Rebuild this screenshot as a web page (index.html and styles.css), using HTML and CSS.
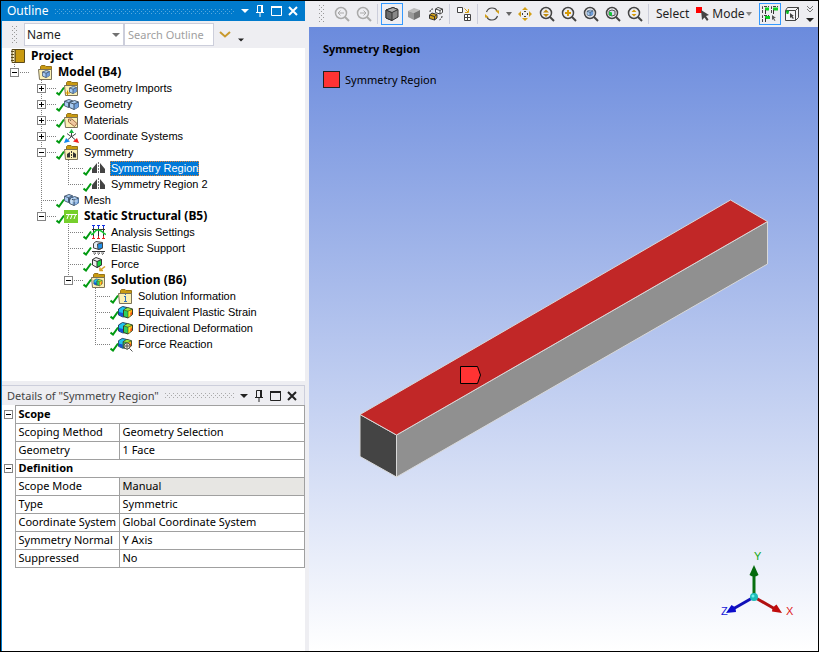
FILE: index.html
```html
<!DOCTYPE html>
<html lang="en">
<head>
<meta charset="utf-8">
<title>Mechanical</title>
<link rel="stylesheet" href="styles.css">
</head>
<body>
<svg class="sprite" aria-hidden="true">
  <symbol id="check" viewBox="0 0 9 10"><path d="M.5 6.500 3 8.500 8 1.500" fill="none" stroke="#009a10" stroke-width="2"/></symbol>
  <symbol id="folder" viewBox="0 0 15 15"><path d="M2.500 5V1.500L3.500 .5H7L8 1.500H13.500V5Z" fill="#c99a10" stroke="#94731c"/><path d="M.5 4.500H13.500V14.500H1.500Z" fill="#fbf0b4" stroke="#7b7258"/></symbol>
  <symbol id="cube" viewBox="0 0 10 10"><path d="M.5 2.500 5.500.5 9.500 2 9.500 7 5 9.500.5 7.500Z" fill="#a9ccf2" stroke="#41546b"/><path d="M5 4 9.500 2V7L5 9.500Z" fill="#6f9fdc"/><path d="M.5 2.500 5 4 9.500 2M5 4V9.500" fill="none" stroke="#41546b"/></symbol>
  <symbol id="rainbow" viewBox="0 0 15 15"><path d="M.5 4 4.500 1.500 9 2.500V11L5 12 .5 10Z" fill="#1fc4ee" stroke="#244564"/><path d="M1 7 5 8V12L1 10Z" fill="#1453d8"/><path d="M5.500 5 9.500 2.500 14.500 4V9.500L10 13 5.500 11.500Z" fill="#2ed05c" stroke="#3b4024"/><path d="M6 5 9.500 3 14 4.200 10 6Z" fill="#9fe63a"/><path d="M10 6.200 14 4.500V9.500L10 12.500Z" fill="#ffb016"/><path d="M10 6.200 12 5.300V11L10 12.500Z" fill="#f6e822"/><path d="M12.500 8 14 7V9.500L12.500 10.700Z" fill="#f04a1c"/><path d="M5.500 5 10 6.200 14.500 4M10 6.200V13" fill="none" stroke="#3b4024" stroke-width=".6"/></symbol>
  <symbol id="sym" viewBox="0 0 15 15"><path d="M6 2V12H1V8ZM9 2V12H14V8Z" fill="#444"/><path d="M7.500 1V13" stroke="#777" stroke-dasharray="2 1"/></symbol>
  <symbol id="mag" viewBox="0 0 16 16"><circle cx="7" cy="7" r="5.500" fill="none" stroke="currentColor" stroke-width="1.500"/><path d="M11 11 15 15" stroke="currentColor" stroke-width="2"/></symbol>
  <symbol id="down" viewBox="0 0 8 4"><path d="M0 0H8L4 4Z" fill="currentColor"/></symbol>
  <symbol id="pin" viewBox="0 0 10 12"><path d="M2.500 7V.5H6M1 7.500H9M5 8V12" fill="none" stroke="currentColor"/><path d="M6 0H8V7H6Z" fill="currentColor"/></symbol>
  <symbol id="max" viewBox="0 0 11 10"><path d="M.5 1V9.500H10.500V1M0 1H11" fill="none" stroke="currentColor"/><path d="M0 0H11V2H0Z" fill="currentColor"/></symbol>
  <symbol id="close" viewBox="0 0 10 10"><path d="M1 1 9 9M9 1 1 9" stroke="currentColor" stroke-width="2"/></symbol>
</svg>
<div class="app">
  <aside class="side">
    <section class="outline">
      <header class="bar bar-active">
        <h2>Outline</h2><span class="dots"></span>
        <button aria-label="Window menu"><svg class="w8"><use href="#down"/></svg></button>
        <button aria-label="Pin"><svg class="w10"><use href="#pin"/></svg></button>
        <button aria-label="Maximize"><svg class="w11"><use href="#max"/></svg></button>
        <button aria-label="Close"><svg class="w10"><use href="#close"/></svg></button>
      </header>
      <div class="filter">
        <span class="grip"></span>
        <div class="combo"><select aria-label="Filter by"><option>Name</option></select><svg class="w8"><use href="#down"/></svg></div>
        <input type="text" aria-label="Search Outline" placeholder="Search Outline">
        <button aria-label="Expand filter"><svg class="chev" viewBox="0 0 12 7"><path d="M1 1 6 5.500 11 1" fill="none" stroke="#c99a2e" stroke-width="2"/></svg></button>
        <button class="low" aria-label="More"><svg class="w6" viewBox="0 0 6 3"><path d="M0 0H6L3 3Z" fill="#222"/></svg></button>
      </div>
      <ul class="tree">
        <li class="root">
          <div class="row project"><svg class="ico" viewBox="0 0 15 15"><path d="M4 .5H13.500V13.500H4Z" fill="#c99a10" stroke="#5b4a1a"/><path d="M1 .5H4V13.500H1Z" fill="#fff3c4" stroke="#5b4a1a"/><path d="M0 2.500H3M0 5.500H3M0 8.500H3M0 11.500H3" stroke="#5b4a1a"/></svg><b>Project</b></div>
          <ul>
            <li>
              <div class="row nocheck"><button class="exp" aria-label="Collapse"></button><i></i><svg class="ico"><use href="#folder"/><use href="#cube" x="4" y="5" width="8" height="8"/></svg><b>Model (B4)</b></div>
              <ul>
                <li><div class="row"><button class="exp plus" aria-label="Expand"></button><i></i><svg class="chk"><use href="#check"/></svg><svg class="ico"><use href="#folder"/><use href="#cube" x="5" y="5" width="8" height="8"/><path d="M1 12H6M3.500 9.500V14.500" stroke="#d09000"/></svg><span>Geometry Imports</span></div></li>
                <li><div class="row"><button class="exp plus" aria-label="Expand"></button><i></i><svg class="chk"><use href="#check"/></svg><svg class="ico"><use href="#cube" x="0" y="2" width="9" height="9"/><use href="#cube" x="5" y="3" width="10" height="10"/></svg><span>Geometry</span></div></li>
                <li><div class="row"><button class="exp plus" aria-label="Expand"></button><i></i><svg class="chk"><use href="#check"/></svg><svg class="ico"><use href="#folder"/><path d="M4.500 6H8L13 10.500 10.500 13.500 4.500 9Z" fill="#efc9a0" stroke="#a66f48"/><path d="M6 7.500H7" stroke="#775"/></svg><span>Materials</span></div></li>
                <li><div class="row"><button class="exp plus" aria-label="Expand"></button><i></i><svg class="chk"><use href="#check"/></svg><svg class="ico" viewBox="0 0 15 15"><path d="M7.500 8V4M7 8 4 10.500M8 8 11 10.500M7 7.500 3 4.500M8 7.500 12 4.500" stroke="#444"/><path d="M5 4 7.500 0 10 4Z" fill="#12b43c"/><path d="M0 14 2 9 6 12.500Z" fill="#1188f0"/><path d="M15 14 13 9 9 12.500Z" fill="#f22020"/></svg><span>Coordinate Systems</span></div></li>
                <li><div class="row"><button class="exp" aria-label="Collapse"></button><i></i><svg class="chk"><use href="#check"/></svg><svg class="ico"><use href="#folder"/><path d="M3 12.500V9L6 7V12.500ZM9 12.500V7L12 9V12.500Z" fill="#333"/><path d="M7.500 6V13" stroke="#333" stroke-dasharray="2 1"/></svg><span>Symmetry</span></div>
                  <ul>
                    <li><div class="row"><i></i><svg class="chk"><use href="#check"/></svg><svg class="ico"><use href="#sym"/></svg><span class="sel">Symmetry Region</span></div></li>
                    <li><div class="row"><i></i><svg class="chk"><use href="#check"/></svg><svg class="ico"><use href="#sym"/></svg><span>Symmetry Region 2</span></div></li>
                  </ul>
                </li>
                <li><div class="row"><i></i><svg class="chk"><use href="#check"/></svg><svg class="ico mesh"><use href="#cube" x="0" y="1" width="9" height="9"/><use href="#cube" x="5" y="3" width="10" height="10"/><path d="M7.500 5V11M12 5V11M6 8H14" stroke="#dbe8f5" stroke-width=".7"/></svg><span>Mesh</span></div></li>
                <li><div class="row"><button class="exp" aria-label="Collapse"></button><i></i><svg class="chk"><use href="#check"/></svg><svg class="ico" viewBox="0 0 15 15"><path d="M0 1H14V14H0Z" fill="#76cf2c"/><path d="M2 5.500H13M4.500 6 3 10M8 6 6.500 10M11.500 6 10 10" fill="none" stroke="#fff"/></svg><b>Static Structural (B5)</b></div>
                  <ul>
                    <li><div class="row"><i></i><svg class="chk"><use href="#check"/></svg><svg class="ico" viewBox="0 0 15 15"><path d="M2.500 2V12M7.500 2V12M12.500 2V12M1 4.500H14" stroke="#333"/><path d="M0 9.500Q2 9.500 3.500 7T7.500 5 11.500 7 15 9.500" fill="none" stroke="#12c832" stroke-width="1.500"/><path d="M1 .5H4M6 .5H9M11 .5H14M2.500 1V3M7.500 1V3M12.500 1V3" stroke="#1434e0"/><path d="M1 13.500H4M6 13.500H9M11 13.500H14M2.500 11V14M7.500 11V14M12.500 11V14" stroke="#e42020"/></svg><span>Analysis Settings</span></div></li>
                    <li><div class="row"><i></i><svg class="chk"><use href="#check"/></svg><svg class="ico" viewBox="0 0 15 15"><path d="M2.500 2.500 5 .5 11.500 1.500V7L8.500 8.500 2.500 7Z" fill="#e8eef4" stroke="#444"/><path d="M6.500 3 11.500 2V7L7 8.500Z" fill="#1f92ee" stroke="#444"/><path d="M1 10.500H14" stroke="#333"/><path d="M2 12H5L3 14M6 12H9L7 14M10 12H13L11 14" fill="none" stroke="#777"/></svg><span>Elastic Support</span></div></li>
                    <li><div class="row"><i></i><svg class="chk"><use href="#check"/></svg><svg class="ico" viewBox="0 0 15 15"><path d="M1.500 2.500 5 .5 10.500 2.500V8L6 10.500 1.500 8Z" fill="#eee" stroke="#333"/><path d="M6 4.500 10.500 2.500V8L6 10.500Z" fill="#14d83e" stroke="#333"/><path d="M1.500 2.500 6 4.500" stroke="#333"/><path d="M14 9.500 10 12.500M9 10.500V13.500H12" fill="none" stroke="#d6a12a" stroke-width="1.500"/></svg><span>Force</span></div></li>
                    <li><div class="row"><button class="exp" aria-label="Collapse"></button><i></i><svg class="chk"><use href="#check"/></svg><svg class="ico"><use href="#folder"/><use href="#rainbow" x="2" y="5" width="10" height="9"/></svg><b>Solution (B6)</b></div>
                      <ul>
                        <li><div class="row"><i></i><svg class="chk"><use href="#check"/></svg><svg class="ico"><use href="#folder"/><path d="M6 7.500H8M7.500 7V12M6 12.500H9M7 5.500H8" stroke="#2f6fbd"/></svg><span>Solution Information</span></div></li>
                        <li><div class="row"><i></i><svg class="chk"><use href="#check"/></svg><svg class="ico"><use href="#rainbow"/></svg><span>Equivalent Plastic Strain</span></div></li>
                        <li><div class="row"><i></i><svg class="chk"><use href="#check"/></svg><svg class="ico"><use href="#rainbow"/></svg><span>Directional Deformation</span></div></li>
                        <li><div class="row"><i></i><svg class="chk"><use href="#check"/></svg><svg class="ico"><use href="#rainbow" width="14" height="14"/><circle cx="9" cy="9" r="3" fill="#f3ead2" stroke="#555"/><path d="M11.500 11.500 14.500 14.500M7 9H11M9 7V11" stroke="#555"/></svg><span>Force Reaction</span></div></li>
                      </ul>
                    </li>
                  </ul>
                </li>
              </ul>
            </li>
          </ul>
        </li>
      </ul>
    </section>
    <section class="details">
      <header class="bar">
        <h2>Details of "Symmetry Region"</h2><span class="dots"></span>
        <button aria-label="Window menu"><svg class="w8"><use href="#down"/></svg></button>
        <button aria-label="Pin"><svg class="w10"><use href="#pin"/></svg></button>
        <button aria-label="Maximize"><svg class="w11"><use href="#max"/></svg></button>
        <button aria-label="Close"><svg class="w10"><use href="#close"/></svg></button>
      </header>
      <table>
        <colgroup><col class="c-exp"><col class="c-key"><col></colgroup>
        <tbody>
        <tr><td class="x"><button class="exp" aria-label="Collapse Scope"></button></td><th colspan="2">Scope</th></tr>
        <tr><td class="x"></td><td>Scoping Method</td><td>Geometry Selection</td></tr>
        <tr><td class="x"></td><td>Geometry</td><td>1 Face</td></tr>
        <tr><td class="x"><button class="exp" aria-label="Collapse Definition"></button></td><th colspan="2">Definition</th></tr>
        <tr><td class="x"></td><td>Scope Mode</td><td class="ro">Manual</td></tr>
        <tr><td class="x"></td><td>Type</td><td>Symmetric</td></tr>
        <tr><td class="x"></td><td>Coordinate System</td><td>Global Coordinate System</td></tr>
        <tr><td class="x"></td><td>Symmetry Normal</td><td>Y Axis</td></tr>
        <tr><td class="x"></td><td>Suppressed</td><td>No</td></tr>
        </tbody>
      </table>
    </section>
  </aside>
  <main class="view">
    <div class="tools">
      <span class="grip"></span>
      <button class="off" aria-label="Previous view"><svg class="w16"><use href="#mag"/><path d="M4 7H10M6.500 4.500 4 7 6.500 9.500" fill="none" stroke="#aaa"/></svg></button>
      <button class="off" aria-label="Next view"><svg class="w16"><use href="#mag"/><path d="M4 7H10M7.500 4.500 10 7 7.500 9.500" fill="none" stroke="#aaa"/></svg></button>
      <span class="sep"></span>
      <button class="on" aria-label="Shaded exterior and edges"><svg class="w16" viewBox="0 0 16 16"><path d="M2 4 9 1.500 14 3.500V11L8 14.500 2 12Z" fill="#888" stroke="#333"/><path d="M2 4 8 6.500V14.500L2 12Z" fill="#6c6c6c" stroke="#333"/><path d="M2 4 9 1.500 14 3.500 8 6.500Z" fill="#aaa" stroke="#333"/></svg></button>
      <button aria-label="Shaded exterior"><svg class="w16" viewBox="0 0 16 16"><path d="M2 5 8 2 14 4 8 7Z" fill="#bbb"/><path d="M2 5 8 7V14L2 11Z" fill="#999"/><path d="M8 7 14 4V11L8 14Z" fill="#737373"/></svg></button>
      <button aria-label="Toggle wireframe"><svg class="w16" viewBox="0 0 16 16"><path d="M7.500 3 10 1.500 14.500 3V6.500L12 8 7.500 6.500ZM7.500 3 12 4.500 14.500 3M12 4.500V8" fill="#fff" stroke="#444"/><path d="M1.500 9 4 7 9 8.500V12L6.500 14 1.500 12.500Z" fill="#d4a017" stroke="#333"/><path d="M1.500 9 6.500 10.500V14M6.500 10.500 9 8.500" fill="none" stroke="#333"/><path d="M2 6Q2 3 5 3M14 10Q14 13 11 14" fill="none" stroke="#333" stroke-dasharray="2 1"/></svg></button>
      <span class="sep"></span>
      <button aria-label="Viewports"><svg class="w16" viewBox="0 0 16 16"><path d="M1.500 1.500H6.500V6.500H1.500Z" fill="#fff" stroke="#444"/><path d="M8.500 8.500H14.500V14.500H8.500ZM8.500 11.500H14.500M11.500 8.500V14.500" fill="#fff" stroke="#444"/><path d="M8.500 2.500 12 6M12.500 3V6.500H9" fill="none" stroke="#d4a017"/></svg></button>
      <span class="sep"></span>
      <button aria-label="Rotate"><svg class="w16" viewBox="0 0 16 16"><path d="M2.500 6Q4 2 8 2T13 5M13.500 10Q12 14 8 14T3 11" fill="none" stroke="#444" stroke-width="1.200"/><path d="M11 4.500H15V8ZM5 11.500H1V8Z" fill="#d4a017"/></svg></button>
      <button class="slim" aria-label="Rotate options"><svg class="w6" viewBox="0 0 6 4"><path d="M0 0H6L3 4Z" fill="#666"/></svg></button>
      <button aria-label="Pan"><svg class="w16" viewBox="0 0 16 16"><path d="M8 1 11 4H5ZM8 15 11 12H5ZM1 8 4 5V11ZM15 8 12 5V11Z" fill="#d4a017"/><path d="M7 5.500H9M7 10.500H9M5.500 7V9M10.500 7V9" stroke="#444"/></svg></button>
      <button aria-label="Zoom"><svg class="w16"><use href="#mag"/><path d="M4 6.500 7 3.500 10 6.500ZM4 8 7 11 10 8Z" fill="#c08c0c"/></svg></button>
      <button aria-label="Box zoom"><svg class="w16"><use href="#mag"/><path d="M4 7H10M7 4V10" stroke="#d49a08" stroke-width="2"/></svg></button>
      <button aria-label="Zoom to fit"><svg class="w16"><use href="#mag"/><use href="#cube" x="3.500" y="3.500" width="7" height="7"/></svg></button>
      <button aria-label="Zoom to selection"><svg class="w16"><use href="#mag"/><path d="M4 5 7 4 10 5V9L7 10 4 9Z" fill="#dde" stroke="#555"/><path d="M4 5.500 7 6.500V10L4 9Z" fill="#12c838"/></svg></button>
      <button aria-label="Zoom in or out"><svg class="w16"><use href="#mag"/><path d="M4.500 6 7 3.500 9.500 6ZM4.500 8 7 10.500 9.500 8Z" fill="#d49a08"/></svg></button>
      <span class="sep"></span>
      <span class="label">Select</span>
      <button class="mode"><svg class="w16" viewBox="0 0 16 16"><path d="M1 1H7V7H1Z" fill="#f00"/><path d="M6 4 14 9 11 10 13.500 13.500 12 15 9.500 11.500 7 14Z" fill="#444"/></svg>Mode<svg class="w6" viewBox="0 0 6 4"><path d="M0 0H6L3 4Z" fill="#888"/></svg></button>
      <button class="on" aria-label="Smart select"><svg class="w18" viewBox="0 0 18 18"><path d="M1.500 8V1.500H8M10.500 8V1.500H17M1.500 17V10.500H8" fill="none" stroke="#444" stroke-dasharray="3 1"/><path d="M4 4H8M12 4H17M4 12.500H9" stroke="#0ad020" stroke-width="3"/><path d="M4.500 5V9M12.500 5V9M4.500 13V17" stroke="#333"/><path d="M11 10 15 13H13L14.500 16 13 15.500 12.500 14 11 15Z" fill="#555"/></svg></button>
      <button aria-label="Body select"><svg class="w16" viewBox="0 0 16 16"><path d="M1.500 4.500H11.500V14.500H1.500ZM1.500 4.500 3.500 1.500H14.500V11.500L11.500 14.500M11.500 4.500 14.500 1.500" fill="#f5f5f7" stroke="#444"/><path d="M2 5.500H5M3.500 5V8" stroke="#09b820" stroke-width="2"/><path d="M6 7 10 10H8.500L10 12.500H8L7.500 11 6 12Z" fill="#444"/></svg></button>
      <button class="slim" aria-label="More tools"><svg class="more" viewBox="0 0 8 18"><path d="M1 1 4 4 7 1M1 4 4 7 7 4" fill="none" stroke="#777"/><path d="M0 13H8L4 17Z" fill="#222"/></svg></button>
    </div>
    <div class="canvas">
      <svg class="model" viewBox="0 0 509 624" role="img" aria-label="Beam with a symmetry region on its top face">
        <g stroke="#d9d9d9" stroke-linejoin="round">
          <path d="M51 387.500 87.500 408V450L51 429.500Z" fill="#444"/>
          <path d="M87.500 408 458.500 194.500V237L87.500 450Z" fill="#909090"/>
          <path d="M51 387.500 421.500 173 458.500 194.500 87.500 408Z" fill="#c12727"/>
        </g>
        <path d="M151.500 339.500H168.500L171.500 348 168.500 356.500H151.500Z" fill="#f33" stroke="#000"/>
      </svg>
      <div class="legend">
        <h1>Symmetry Region</h1>
        <p><span class="swatch"></span>Symmetry Region</p>
      </div>
      <svg class="triad" viewBox="0 0 80 76" role="img" aria-label="Axes">
        <path d="M36 49V21" stroke="#087010" stroke-width="3"/><path d="M36 17 40.500 27Q36 30 31.500 27Z" fill="#056b0d"/>
        <path d="M36 49 57 61" stroke="#b01010" stroke-width="3"/><path d="M64 65 54 63.500Q54 59 58.500 56.500Z" fill="#c00c0c"/>
        <path d="M36 49 15 61" stroke="#1010b8" stroke-width="3"/><path d="M8 65 18 64Q18 59 13.500 57Z" fill="#0c0ccc"/>
        <circle cx="36" cy="49" r="4" fill="#1cbcb8"/><circle cx="35" cy="48" r="1.500" fill="#6ff0ec"/>
        <text x="36" y="12" fill="#12a812">Y</text><text x="68" y="67" fill="#e01818">X</text><text x="3" y="67" fill="#1818d8">Z</text>
      </svg>
    </div>
  </main>
</div>
</body>
</html>
```
FILE: styles.css
```css
* { box-sizing: border-box; }
body { margin: 0; font: 11px/16px "Noto Sans", sans-serif; color: #000; }
h1, h2, p, ul { margin: 0; padding: 0; }
ul { list-style: none; }
svg { display: block; flex: none; }
button { border: 0; padding: 0; background: none; color: inherit; font: inherit; display: flex; align-items: center; justify-content: center; flex: none; }
.sprite { display: none; }
.w6 { width: 6px; height: 4px; }
.w8 { width: 8px; height: 4px; }
.w10 { width: 10px; height: 12px; }
.w11 { width: 11px; height: 10px; }
.w16 { width: 16px; height: 16px; }
.w18 { width: 18px; height: 18px; }

.app { display: flex; min-height: 100vh; border: 1px solid #000; background: #eeeef2; }
.side { width: 304px; flex: none; display: flex; flex-direction: column; gap: 4px; border-left: 1px solid #007acc; }
.view { flex: 1; min-width: 0; margin-left: 4px; display: flex; flex-direction: column; }

.bar { display: flex; align-items: center; height: 20px; padding: 0 7px 0 5px; gap: 6px; color: #222; }
.bar h2 { font-size: 11px; font-weight: 400; color: #444; white-space: nowrap; }
.bar-active { background: #007acc; color: #fff; }
.bar-active h2 { font-size: 12px; color: #fff; }
/* Two offset 4px grids of single-pixel dots */
.dots { flex: 1; height: 5px; color: #aaa; background: conic-gradient(from 270deg at 1px 1px, currentColor 90deg, transparent 0) 0 0 / 4px 4px, conic-gradient(from 270deg at 1px 1px, currentColor 90deg, transparent 0) 2px 2px / 4px 4px; }
.bar-active .dots { color: #58a9de; }

.outline { flex: none; background: #fff; }
.filter { display: flex; align-items: center; height: 27px; padding-left: 10px; }
.filter, .tools { background: #eeeef2; }
.grip { width: 6px; height: 18px; flex: none; color: #999; background: conic-gradient(from 270deg at 1px 1px, currentColor 90deg, transparent 0) 0 0 / 4px 4px, conic-gradient(from 270deg at 1px 1px, currentColor 90deg, transparent 0) 2px 2px / 4px 4px; }
.filter .grip { margin-right: 6px; }
.combo { display: grid; align-items: center; width: 100px; height: 23px; border: 1px solid #cccedb; background: #fff; color: #717171; }
.combo select, .combo svg { grid-area: 1 / 1; }
.combo svg { justify-self: end; margin-right: 3px; pointer-events: none; }
.combo select { appearance: none; border: 0; background: none; height: 21px; padding: 0 2px; font: 12px "Noto Sans", sans-serif; color: #1e1e1e; }
.filter input { width: 90px; height: 23px; border: 1px solid #cccedb; padding: 0 3px; font: 11px "Noto Sans", sans-serif; background: #fff; }
.filter input::placeholder { color: #a0a0a0; opacity: 1; }
.chev { width: 12px; height: 7px; margin: 0 7px 0 5px; }
.low { align-self: flex-end; height: 16px; }

.tree { height: 333px; overflow: hidden; font-family: "Liberation Sans", Arial, sans-serif; }
.tree li { background: repeating-linear-gradient(#808080 0 1px, transparent 1px 2px) 4px 0 / 1px 100% no-repeat; }
.tree li:last-child { background-size: 1px 8px; }
.tree .root { background: none; }
.tree ul { padding-left: 27px; }
.root > ul { padding-left: 8px; }
.row { display: flex; align-items: center; height: 16px; white-space: nowrap; }
.row > i { flex: none; width: 19px; height: 1px; background: repeating-linear-gradient(90deg, #808080 0 1px, transparent 1px 2px) 4px 0 no-repeat; }
.exp + i { width: 10px; background-position: 1px 0; }
.row.nocheck > i { margin-right: 9px; }
.row .chk { width: 9px; height: 10px; margin-right: -1px; align-self: flex-end; }
.ico { width: 15px; height: 15px; margin-right: 4px; }
.row span { padding: 0 1px; line-height: 15px; }
.row b { font-family: "Noto Sans", sans-serif; font-size: 12px; padding-left: 1px; }
.project { padding-left: 9px; }
.row .sel { background: #0078d7; color: #fff; outline: 1px dotted #e8802a; outline-offset: -1px; }
.exp { width: 9px; height: 9px; border: 1px solid #848484; background: linear-gradient(#000, #000) center / 5px 1px no-repeat #fff; }
.exp.plus { background: linear-gradient(#000, #000) center / 5px 1px no-repeat, linear-gradient(#000, #000) center / 1px 5px no-repeat #fff; }

.details { flex: 1; background: #fff; }
.details .bar { background: #eeeef2; border: 1px solid #cccedb; border-bottom: 0; border-left: 0; }
table { width: 100%; border-collapse: collapse; table-layout: fixed; line-height: 15px; }
.c-exp { width: 13px; }
.c-key { width: 104px; }
td, th { height: 18px; padding: 0 3px 2px; border: 1px solid #a0a0a0; text-align: left; white-space: nowrap; }
.x { border-width: 0 1px 0 0; padding: 0 2px; }
.ro { background: #e7e6e3; }

.tools { display: flex; align-items: center; height: 26px; padding-left: 10px; overflow: hidden; font-size: 12px; color: #1e1e1e; }
.tools .grip { margin-right: 6px; }
.tools button { width: 22px; height: 22px; color: #444; }
.tools .off { color: #aaa; }
.tools .on { border: 1px solid #3399ff; }
.tools .slim { width: 11px; }
.tools .mode { width: auto; gap: 1px; padding: 0 7px 0 6px; color: #1e1e1e; }
.tools .slim:last-child { margin-left: 2px; }
.sep { width: 1px; height: 20px; margin: 0 3px 0 2px; background: #cccedb; flex: none; }
.label { padding-left: 4px; }
.more { width: 8px; height: 18px; }
.canvas { flex: 1; display: grid; background: linear-gradient(#6b8bdd, #fff); }
.canvas > * { grid-area: 1 / 1; }
.model { width: 100%; height: 100%; }
.legend { padding: 14px; }
.legend h1 { font-size: 11px; line-height: 16px; }
.legend p { display: flex; align-items: center; gap: 5px; margin-top: 14px; }
.swatch { width: 17px; height: 17px; border: 1px solid #222; background: #f33; }
.triad { width: 80px; height: 76px; place-self: end; margin: 0 20px 27px 0; font: 11px "Liberation Sans", sans-serif; }
```
